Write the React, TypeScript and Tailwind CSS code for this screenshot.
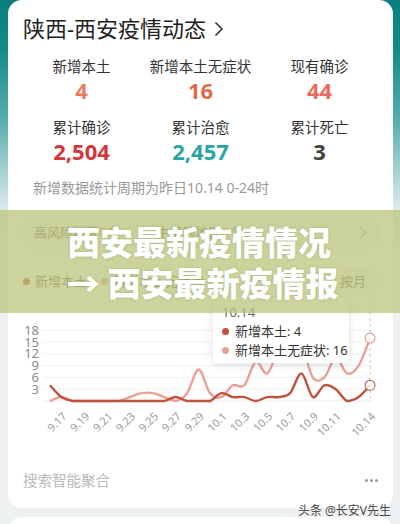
import React from 'react';

// 新增本土 / 新增本土无症状, 9.16 - 10.14
const local = [4, 1, 0, 0, 0, 0, 0, 0, 0, 0, 0, 1, 0, 0, 0, 2, 1, 1, 0, 1, 1, 2, 7, 1, 4, 3, 0, 1, 4];
const asym = [0, 1, 0, 0, 0, 0, 0, 1, 2, 2, 1, 0, 2, 8, 2, 1, 4, 4, 10, 7, 13, 16, 14, 6, 6, 11, 7, 9, 16];

const ticks: [number, string][] = [
  [1, '9.17'], [3, '9.19'], [5, '9.21'], [7, '9.23'], [9, '9.25'], [11, '9.27'], [13, '9.29'],
  [15, '10.1'], [17, '10.3'], [19, '10.5'], [21, '10.7'], [23, '10.9'], [25, '10.11'], [28, '10.14'],
];

const BASE = 401;
const X = (i: number) => 50 + i * 11.43;
const Y = (v: number) => BASE - v * 3.93;

function smoothPath(values: number[]) {
  const pts = values.map((v, i) => [X(i), Y(v)]);
  let d = `M${pts[0][0]},${pts[0][1]}`;
  for (let i = 0; i < pts.length - 1; i++) {
    const p0 = pts[i - 1] || pts[i];
    const p1 = pts[i];
    const p2 = pts[i + 1];
    const p3 = pts[i + 2] || p2;
    const c1x = p1[0] + (p2[0] - p0[0]) / 6;
    const c1y = Math.min(p1[1] + (p2[1] - p0[1]) / 6, BASE);
    const c2x = p2[0] - (p3[0] - p1[0]) / 6;
    const c2y = Math.min(p2[1] - (p3[1] - p1[1]) / 6, BASE);
    d += ` C${c1x},${c1y} ${c2x},${c2y} ${p2[0]},${p2[1]}`;
  }
  return d;
}

const stats = [
  { label: '新增本土', value: '4', color: 'text-[#ea7b5e]' },
  { label: '新增本土无症状', value: '16', color: 'text-[#de6a4b]' },
  { label: '现有确诊', value: '44', color: 'text-[#eb6a5b]' },
  { label: '累计确诊', value: '2,504', color: 'text-[#d2373c]' },
  { label: '累计治愈', value: '2,457', color: 'text-[#2aa5a5]' },
  { label: '累计死亡', value: '3', color: 'text-[#444444]' },
];

const Chart = () => (
  <div className="relative -mx-[14px]">
    <svg width={385} height={146} viewBox="8 300 385 146" className="block">
      {[3, 6, 9, 12, 15, 18].map((v) => (
        <line key={v} x1={43} x2={372} y1={Y(v)} y2={Y(v)} stroke="#f0f0f0" strokeWidth={1} />
      ))}
      <line x1={43} x2={372} y1={BASE} y2={BASE} stroke="#ececec" strokeWidth={1} />
      {[3, 6, 9, 12, 15, 18].map((v) => (
        <text key={v} x={39} y={Y(v) + 4.5} textAnchor="end" fontSize={13} fill="#8a8a8a">
          {v}
        </text>
      ))}
      <line x1={370} x2={370} y1={300} y2={BASE} stroke="#c8c8c8" strokeWidth={1} strokeDasharray="3 3" />
      <path d={smoothPath(asym)} fill="none" stroke="#e9a193" strokeWidth={2.4} strokeLinejoin="round" />
      <path d={smoothPath(local)} fill="none" stroke="#c0533e" strokeWidth={2.4} strokeLinejoin="round" />
      <circle cx={X(28)} cy={Y(16)} r={5} fill="#ffffff" fillOpacity={0.8} stroke="#d9a095" strokeWidth={1.2} />
      <circle cx={X(28)} cy={Y(4)} r={5} fill="#ffffff" fillOpacity={0.8} stroke="#b77565" strokeWidth={1.2} />
      {ticks.map(([i, t]) => {
        const ax = X(i) + 6;
        const ay = 417;
        return (
          <text key={t} x={ax} y={ay} textAnchor="end" fontSize={11} fill="#9a9a9a" transform={`rotate(-45 ${ax} ${ay})`}>
            {t}
          </text>
        );
      })}
    </svg>
    <div className="absolute left-[205px] top-[-3px] w-[136px] rounded-[4px] bg-white pl-[9px] pt-[6px] pb-[3px] shadow-[0_2px_10px_rgba(0,0,0,0.12)]">
      <div className="text-[13px] leading-[19px] text-[#666]">10.14</div>
      <div className="flex items-center gap-[6px] text-[13px] leading-[19px] text-[#333]">
        <span className="h-[7px] w-[7px] rounded-full bg-[#c0533e]" />
        新增本土: 4
      </div>
      <div className="flex items-center gap-[6px] text-[13px] leading-[19px] text-[#333]">
        <span className="h-[7px] w-[7px] rounded-full bg-[#e9a193]" />
        新增本土无症状: 16
      </div>
    </div>
  </div>
);

export default function App() {
  return (
    <div
      className="relative h-[524px] w-[400px] overflow-hidden bg-[linear-gradient(180deg,#0a7d7d_0px,#168a8a_50px,#58adad_120px,#a6d0d0_170px,#d8e8e8_205px,#eef1f2_250px)] font-['Noto_Sans','Noto_Sans_CJK_SC',sans-serif]"
    >
      <div className="ml-[8px] w-[385px] rounded-[14px] bg-white px-[14px] pt-[14px] pb-[18px]">
        <div className="flex items-center gap-[8px] pl-[1px] text-[22px] leading-[28px] text-[#222]">
          <span>陕西-西安疫情动态</span>
          <svg width="10" height="16" viewBox="0 0 10 16" className="mt-[1px]">
            <polyline points="1.5,1.5 8,8 1.5,14.5" fill="none" stroke="#333" strokeWidth="1.6" />
          </svg>
        </div>

        <div className="mt-[14px] grid grid-cols-3 gap-y-[13px]">
          {stats.map((s) => (
            <div key={s.label} className="flex flex-col items-center">
              <span className="text-[14.5px] leading-[20px] text-[#333]">{s.label}</span>
              <span className={`text-[22px] font-bold leading-[28px] ${s.color}`}>{s.value}</span>
            </div>
          ))}
        </div>

        <div className="mt-[13px] pl-[11px] text-[14px] leading-[20px] text-[#999]">
          新增数据统计周期为昨日10.14 0-24时
        </div>

        <div className="mt-[17px] flex h-[35px] items-center justify-between rounded-[10px] bg-[#f6f7f8] pl-[12px] pr-[12px]">
          <div className="text-[13px] text-[#666]">
            高风险地区<span className="text-[#f0a02c]">0</span>个
            <span className="ml-[37px]">中风险地区</span>
            <span className="text-[#f0a02c]">0</span>个
          </div>
          <svg width="8" height="13" viewBox="0 0 8 13">
            <polyline points="1,1 6.5,6.5 1,12" fill="none" stroke="#aaa" strokeWidth="1.3" />
          </svg>
        </div>

        <div className="mt-[18px] flex h-[27px] items-center justify-between">
          <div className="flex items-center text-[13px] text-[#666]">
            <span className="ml-[1px] h-[7px] w-[7px] rounded-full bg-[#c0533e]" />
            <span className="ml-[5px]">新增本土</span>
            <span className="ml-[14px] h-[7px] w-[7px] rounded-full bg-[#e9a193]" />
            <span className="ml-[5px]">新增本土无症状</span>
          </div>
          <div className="flex h-[27px] w-[52px] items-center justify-center rounded-full bg-[#f4f5f6] text-[13px] text-[#666]">
            按月
          </div>
        </div>

        <div className="mt-[5px]">
          <Chart />
        </div>

        <div className="mt-[24px] flex items-center justify-between pl-[1px] pr-[1px]">
          <span className="text-[14.5px] leading-[20px] text-[#b9b9b9]">搜索智能聚合</span>
          <div className="flex gap-[2px]">
            <span className="h-[3px] w-[3px] rounded-full bg-[#999]" />
            <span className="h-[3px] w-[3px] rounded-full bg-[#999]" />
            <span className="h-[3px] w-[3px] rounded-full bg-[#999]" />
          </div>
        </div>
      </div>

      <div className="ml-[8px] mt-[9px] h-[40px] w-[385px] rounded-t-[14px] bg-white" />

      <div className="absolute left-0 top-[210px] h-[103px] w-[400px] bg-[rgba(188,196,123,0.75)] pl-[67px] pt-[11px]">
        <div className="font-['Noto_Sans_CJK_SC',sans-serif] text-[33px] font-black leading-[41px] text-white [text-shadow:0_0_3px_rgba(90,90,60,0.25)]">
          <div>西安最新疫情情况</div>
          <div>→ 西安最新疫情报</div>
        </div>
      </div>

      <div className="absolute right-[9px] top-[503px] text-[12px] leading-[15px] text-[#444] [text-shadow:0_0_2px_#fff]">
        头条 @长安V先生
      </div>
    </div>
  );
}
